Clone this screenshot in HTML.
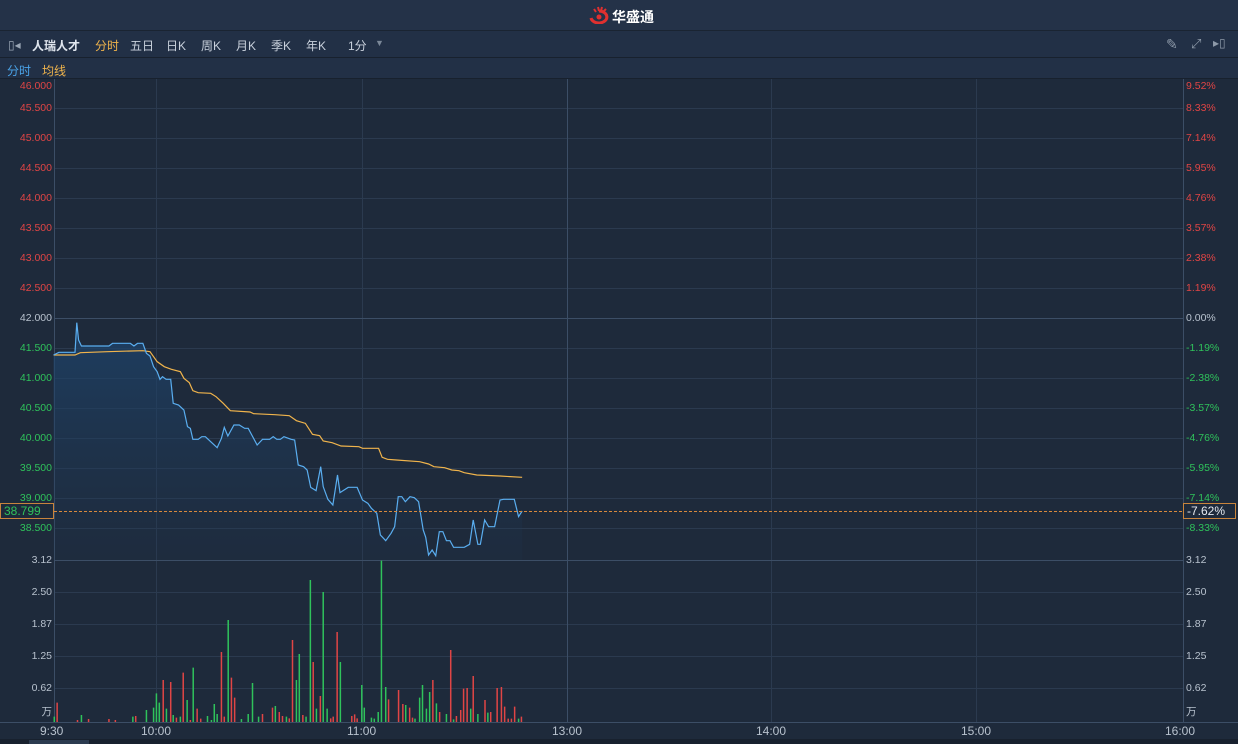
<!DOCTYPE html>
<html><head><meta charset="utf-8"><style>
*{margin:0;padding:0;box-sizing:border-box}
body{width:1238px;height:744px;overflow:hidden;background:#1e2a3b;font-family:"Liberation Sans","Noto Sans CJK SC",sans-serif;position:relative}
.top{position:absolute;left:0;top:0;width:1238px;height:31px;background:#243248;border-bottom:1px solid #1a2432}
.tb{position:absolute;left:0;top:31px;width:1238px;height:27px;background:#223046;border-bottom:1px solid #18212e}
.lg{position:absolute;left:0;top:58px;width:1238px;height:21px;background:#223046;border-bottom:1px solid #18212e}
.t{position:absolute;font-size:12px;color:#c9d1dc;white-space:nowrap}
svg{position:absolute;left:0;top:0}
</style></head><body>
<div class="top"></div>
<div style="position:absolute;left:588px;top:6px;width:22px;height:18px">
<svg width="22" height="18" viewBox="0 0 22 18"><path d="M3 12 A8 6 0 1 0 11 5" fill="none" stroke="#e0302f" stroke-width="3"/><path d="M6 3 L8 6 M10 1 L11 5 M14 1 L13 5 M18 3 L15 6" stroke="#e0302f" stroke-width="2"/><circle cx="11" cy="11" r="2.5" fill="#e0302f"/></svg></div>
<div class="t" style="left:612px;top:7px;font-size:14px;font-weight:bold;color:#fff">华盛通</div>
<div class="tb"></div>
<div class="lg"></div>
<div class="t" style="left:8px;top:38px;color:#9aa6b5">▯◂</div>
<div class="t" style="left:32px;top:37px;color:#e0e6ee;font-weight:bold">人瑞人才</div>
<div class="t" style="left:95px;top:37px;color:#f0b44c">分时</div>
<div class="t" style="left:130px;top:37px">五日</div>
<div class="t" style="left:166px;top:37px">日K</div>
<div class="t" style="left:201px;top:37px">周K</div>
<div class="t" style="left:236px;top:37px">月K</div>
<div class="t" style="left:271px;top:37px">季K</div>
<div class="t" style="left:306px;top:37px">年K</div>
<div class="t" style="left:348px;top:37px">1分</div>
<div class="t" style="left:375px;top:38px;color:#7a8797;font-size:9px">▼</div>
<div class="t" style="left:1166px;top:36px;color:#8d99a8;font-size:14px">✎</div>
<div class="t" style="left:1191px;top:36px;color:#8d99a8;font-size:13px">⤢</div>
<div class="t" style="left:1213px;top:36px;color:#8d99a8;font-size:12px">▸▯</div>
<div class="t" style="left:7px;top:62px;color:#4aa3e8">分时</div>
<div class="t" style="left:42px;top:62px;color:#f0b44c">均线</div>

<svg width="1238" height="744">
<defs><linearGradient id="gf" x1="0" y1="0" x2="0" y2="1"><stop offset="0" stop-color="#1e4670" stop-opacity=".75"/><stop offset="1" stop-color="#1e3550" stop-opacity=".15"/></linearGradient></defs>
<g stroke="#2b3a4f" stroke-width="1">
<line x1="54" y1="108.5" x2="1183" y2="108.5"/><line x1="54" y1="138.5" x2="1183" y2="138.5"/><line x1="54" y1="168.5" x2="1183" y2="168.5"/><line x1="54" y1="198.5" x2="1183" y2="198.5"/><line x1="54" y1="228.5" x2="1183" y2="228.5"/><line x1="54" y1="258.5" x2="1183" y2="258.5"/><line x1="54" y1="288.5" x2="1183" y2="288.5"/><line x1="54" y1="348.5" x2="1183" y2="348.5"/><line x1="54" y1="378.5" x2="1183" y2="378.5"/><line x1="54" y1="408.5" x2="1183" y2="408.5"/><line x1="54" y1="438.5" x2="1183" y2="438.5"/><line x1="54" y1="468.5" x2="1183" y2="468.5"/><line x1="54" y1="498.5" x2="1183" y2="498.5"/><line x1="54" y1="528.5" x2="1183" y2="528.5"/>
<line x1="54" y1="592.5" x2="1183" y2="592.5"/><line x1="54" y1="624.5" x2="1183" y2="624.5"/><line x1="54" y1="656.5" x2="1183" y2="656.5"/><line x1="54" y1="688.5" x2="1183" y2="688.5"/>
<line x1="156.5" y1="79" x2="156.5" y2="722"/><line x1="362.5" y1="79" x2="362.5" y2="722"/><line x1="771.5" y1="79" x2="771.5" y2="722"/><line x1="976.5" y1="79" x2="976.5" y2="722"/>
</g>
<g stroke="#3c4e66" stroke-width="1">
<line x1="54.5" y1="79" x2="54.5" y2="722"/><line x1="1183.5" y1="79" x2="1183.5" y2="722"/><line x1="567.5" y1="79" x2="567.5" y2="722"/>
<line x1="54" y1="318.5" x2="1183" y2="318.5"/><line x1="54" y1="560.5" x2="1183" y2="560.5"/><line x1="0" y1="722.5" x2="1238" y2="722.5"/>
</g>
<g transform="translate(0 300) scale(0.357143 0.333333)">
<polygon fill="url(#gf)" points="150,165 165,157 210,157 215,68 220,120 228,138 305,138 315,130 365,130 375,138 385,130 400,130 410,160 420,168 430,200 440,215 448,238 455,230 465,238 478,238 485,310 500,315 515,330 525,380 533,385 540,418 555,418 565,410 575,410 590,425 608,443 620,415 628,382 638,408 655,375 670,375 685,385 695,385 705,405 720,435 735,418 755,418 765,410 775,418 785,418 795,410 815,418 825,420 835,495 850,500 860,510 870,562 885,572 898,500 905,560 918,598 932,615 945,525 952,578 975,562 1000,562 1015,600 1030,610 1040,625 1055,640 1065,705 1080,722 1095,700 1105,680 1115,590 1125,590 1135,605 1148,590 1160,593 1172,605 1185,690 1192,712 1200,765 1210,750 1220,767 1230,695 1240,695 1250,722 1260,722 1270,742 1300,742 1315,733 1325,660 1338,733 1345,733 1357,660 1368,680 1385,680 1400,600 1410,598 1440,598 1452,650 1462,633 1462,780 150,780"/>
<polyline fill="none" stroke="#f0b44c" stroke-width="1.2" vector-effect="non-scaling-stroke" points="150,165 210,165 225,158 300,155 400,152 420,155 440,185 460,200 480,208 505,215 515,235 530,248 540,272 555,278 590,280 605,290 625,310 645,332 700,336 710,341 770,344 810,347 830,362 855,370 875,403 895,407 905,423 930,428 955,438 1005,440 1015,445 1060,445 1070,472 1085,478 1110,480 1175,485 1200,492 1215,500 1245,503 1265,510 1285,512 1300,518 1335,525 1400,528 1462,532"/>
<polyline fill="none" stroke="#5aaef0" stroke-width="1.2" vector-effect="non-scaling-stroke" points="150,165 165,157 210,157 215,68 220,120 228,138 305,138 315,130 365,130 375,138 385,130 400,130 410,160 420,168 430,200 440,215 448,238 455,230 465,238 478,238 485,310 500,315 515,330 525,380 533,385 540,418 555,418 565,410 575,410 590,425 608,443 620,415 628,382 638,408 655,375 670,375 685,385 695,385 705,405 720,435 735,418 755,418 765,410 775,418 785,418 795,410 815,418 825,420 835,495 850,500 860,510 870,562 885,572 898,500 905,560 918,598 932,615 945,525 952,578 975,562 1000,562 1015,600 1030,610 1040,625 1055,640 1065,705 1080,722 1095,700 1105,680 1115,590 1125,590 1135,605 1148,590 1160,593 1172,605 1185,690 1192,712 1200,765 1210,750 1220,767 1230,695 1240,695 1250,722 1260,722 1270,742 1300,742 1315,733 1325,660 1338,733 1345,733 1357,660 1368,680 1385,680 1400,600 1410,598 1440,598 1452,650 1462,633"/>
</g>
<line x1="54" y1="511.5" x2="1183" y2="511.5" stroke="#d98a3c" stroke-width="1" stroke-dasharray="3,2"/>
<g transform="translate(0 560) scale(0.357143 0.333333)">
<g stroke-width="4.2" fill="none">
<path stroke="#2fc25b" d="M152 486V470M228 486V465M372 486V470M410 486V450M430 486V443M438 486V400M446 486V428M466 486V446M485 486V465M505 486V470M524 486V420M541 486V323M581 486V468M592 486V480M600 486V432M608 486V462M639 486V180M676 486V477M695 486V462M707 486V369M724 486V470M771 486V438M802 486V470M830 486V360M838 486V282M857 486V470M869 486V60M886 486V446M905 486V96M916 486V446M953 486V306M1013 486V375M1020 486V443M1040 486V473M1048 486V476M1059 486V456M1068 486V2M1080 486V381M1136 486V435M1162 486V476M1175 486V413M1183 486V375M1194 486V446M1203 486V396M1222 486V430M1250 486V462M1270 486V478M1318 486V446M1338 486V462M1366 486V458M1452 486V476"/>
<path stroke="#e04545" d="M160 486V428M217 486V480M248 486V477M305 486V477M323 486V480M380 486V468M457 486V360M478 486V366M494 486V473M513 486V338M533 486V480M552 486V446M562 486V476M620 486V276M628 486V470M648 486V353M657 486V413M735 486V462M763 486V443M782 486V456M791 486V468M810 486V475M819 486V240M848 486V465M877 486V306M897 486V408M926 486V475M933 486V470M944 486V216M985 486V468M993 486V463M1000 486V475M1088 486V418M1116 486V390M1128 486V432M1147 486V443M1155 486V473M1212 486V360M1231 486V456M1262 486V270M1278 486V468M1290 486V450M1298 486V386M1308 486V384M1325 486V348M1358 486V420M1374 486V456M1392 486V384M1404 486V381M1413 486V440M1423 486V476M1432 486V476M1441 486V440M1460 486V470"/>
</g></g>
<rect x="0.5" y="503.5" width="53" height="15" fill="#1e2a3b" stroke="#c8843c"/>
<rect x="1183.5" y="503.5" width="52" height="15" fill="#1e2a3b" stroke="#c8843c"/>
<rect x="0" y="739" width="1238" height="5" fill="#18212e"/>
<rect x="29" y="740" width="60" height="4" fill="#2c3b50"/>
</svg>

<div style="position:absolute;left:0;top:0;width:52px;font-size:10.5px;text-align:right;line-height:12px">
<div style="position:absolute;right:0;top:80px;color:#e04545">46.000</div>
<div style="position:absolute;right:0;top:102px;color:#e04545">45.500</div>
<div style="position:absolute;right:0;top:132px;color:#e04545">45.000</div>
<div style="position:absolute;right:0;top:162px;color:#e04545">44.500</div>
<div style="position:absolute;right:0;top:192px;color:#e04545">44.000</div>
<div style="position:absolute;right:0;top:222px;color:#e04545">43.500</div>
<div style="position:absolute;right:0;top:252px;color:#e04545">43.000</div>
<div style="position:absolute;right:0;top:282px;color:#e04545">42.500</div>
<div style="position:absolute;right:0;top:312px;color:#b8c2ce">42.000</div>
<div style="position:absolute;right:0;top:342px;color:#2fc25b">41.500</div>
<div style="position:absolute;right:0;top:372px;color:#2fc25b">41.000</div>
<div style="position:absolute;right:0;top:402px;color:#2fc25b">40.500</div>
<div style="position:absolute;right:0;top:432px;color:#2fc25b">40.000</div>
<div style="position:absolute;right:0;top:462px;color:#2fc25b">39.500</div>
<div style="position:absolute;right:0;top:492px;color:#2fc25b">39.000</div>
<div style="position:absolute;right:0;top:522px;color:#2fc25b">38.500</div>
<div style="position:absolute;right:0;top:554px;color:#b8c2ce">3.12</div>
<div style="position:absolute;right:0;top:586px;color:#b8c2ce">2.50</div>
<div style="position:absolute;right:0;top:618px;color:#b8c2ce">1.87</div>
<div style="position:absolute;right:0;top:650px;color:#b8c2ce">1.25</div>
<div style="position:absolute;right:0;top:682px;color:#b8c2ce">0.62</div>
<div style="position:absolute;right:0;top:706px;color:#b8c2ce">万</div>
</div>
<div class="t" style="left:4px;top:504px;font-size:12px;color:#2fc25b">38.799</div>
<div style="position:absolute;left:1186px;top:0;font-size:10.5px;line-height:12px">
<div style="position:absolute;left:0;top:80px;color:#e04545">9.52%</div>
<div style="position:absolute;left:0;top:102px;color:#e04545">8.33%</div>
<div style="position:absolute;left:0;top:132px;color:#e04545">7.14%</div>
<div style="position:absolute;left:0;top:162px;color:#e04545">5.95%</div>
<div style="position:absolute;left:0;top:192px;color:#e04545">4.76%</div>
<div style="position:absolute;left:0;top:222px;color:#e04545">3.57%</div>
<div style="position:absolute;left:0;top:252px;color:#e04545">2.38%</div>
<div style="position:absolute;left:0;top:282px;color:#e04545">1.19%</div>
<div style="position:absolute;left:0;top:312px;color:#b8c2ce">0.00%</div>
<div style="position:absolute;left:0;top:342px;color:#2fc25b">-1.19%</div>
<div style="position:absolute;left:0;top:372px;color:#2fc25b">-2.38%</div>
<div style="position:absolute;left:0;top:402px;color:#2fc25b">-3.57%</div>
<div style="position:absolute;left:0;top:432px;color:#2fc25b">-4.76%</div>
<div style="position:absolute;left:0;top:462px;color:#2fc25b">-5.95%</div>
<div style="position:absolute;left:0;top:492px;color:#2fc25b">-7.14%</div>
<div style="position:absolute;left:0;top:522px;color:#2fc25b">-8.33%</div>
<div style="position:absolute;left:0;top:554px;color:#b8c2ce">3.12</div>
<div style="position:absolute;left:0;top:586px;color:#b8c2ce">2.50</div>
<div style="position:absolute;left:0;top:618px;color:#b8c2ce">1.87</div>
<div style="position:absolute;left:0;top:650px;color:#b8c2ce">1.25</div>
<div style="position:absolute;left:0;top:682px;color:#b8c2ce">0.62</div>
<div style="position:absolute;left:0;top:706px;color:#b8c2ce">万</div>
</div>
<div class="t" style="left:1187px;top:504px;font-size:12px;color:#e6ebf1">-7.62%</div>
<div class="t" style="left:40px;top:724px;font-size:12px;color:#b8c2ce">9:30</div>
<div class="t" style="left:141px;top:724px;font-size:12px;color:#b8c2ce">10:00</div>
<div class="t" style="left:347px;top:724px;font-size:12px;color:#b8c2ce">11:00</div>
<div class="t" style="left:552px;top:724px;font-size:12px;color:#b8c2ce">13:00</div>
<div class="t" style="left:756px;top:724px;font-size:12px;color:#b8c2ce">14:00</div>
<div class="t" style="left:961px;top:724px;font-size:12px;color:#b8c2ce">15:00</div>
<div class="t" style="left:1165px;top:724px;font-size:12px;color:#b8c2ce">16:00</div>
</body></html>
